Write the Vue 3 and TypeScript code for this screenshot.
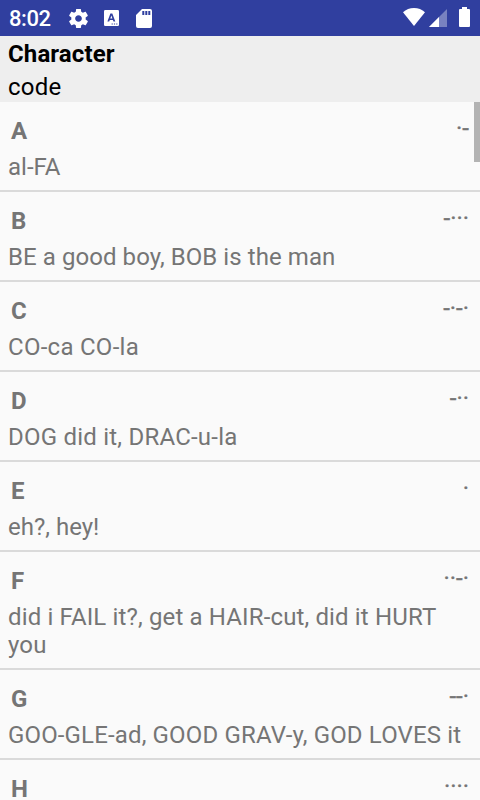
<script setup lang="ts">
interface Entry {
  character: string
  code: string
  phrase: string
  tracking: number
}

const entries: Entry[] = [
  { character: 'A', code: '·-', phrase: 'al-FA', tracking: 0 },
  { character: 'B', code: '-···', phrase: 'BE a good boy, BOB is the man', tracking: 0.07 },
  { character: 'C', code: '-·-·', phrase: 'CO-ca CO-la', tracking: 0.27 },
  { character: 'D', code: '-··', phrase: 'DOG did it, DRAC-u-la', tracking: 0.22 },
  { character: 'E', code: '·', phrase: 'eh?, hey!', tracking: 0 },
  { character: 'F', code: '··-·', phrase: 'did i FAIL it?, get a HAIR-cut, did it HURT you', tracking: 0.14 },
  { character: 'G', code: '--·', phrase: 'GOO-GLE-ad, GOOD GRAV-y, GOD LOVES it', tracking: 0.15 },
  { character: 'H', code: '····', phrase: '', tracking: 0 },
]
</script>

<template>
  <div class="screen">
    <div class="status">
      <span class="clock">8:02</span>
      <svg class="gear" viewBox="0 0 24 24"><path d="M19.43 12.98c.04-.32.07-.64.07-.98s-.03-.66-.07-.98l2.110-1.650c.19-.15.24-.42.12-.64l-2-3.460c-.12-.22-.39-.3-.61-.22l-2.490 1c-.52-.4-1.080-.73-1.690-.98l-.38-2.650C14.460 2.180 14.250 2 14 2h-4c-.25 0-.46.18-.49.42l-.38 2.650c-.61.25-1.170.59-1.690.98l-2.490-1c-.23-.09-.49 0-.61.22l-2 3.460c-.13.22-.07.49.12.64l2.110 1.650c-.04.32-.07.65-.07.98s.03.66.07.98l-2.110 1.650c-.19.15-.24.42-.12.64l2 3.460c.12.22.39.3.61.22l2.490-1c.52.4 1.080.73 1.690.98l.38 2.650c.03.24.24.42.49.42h4c.25 0 .46-.18.49-.42l.38-2.650c.61-.25 1.170-.59 1.690-.98l2.490 1c.23.09.49 0 .61-.22l2-3.460c.12-.22.07-.49-.12-.64l-2.110-1.650zM12 15.500c-1.930 0-3.500-1.570-3.500-3.500s1.570-3.500 3.500-3.500 3.500 1.570 3.500 3.500-1.570 3.500-3.500 3.500z" /></svg>
      <svg class="keyboard" viewBox="0 0 15 16">
        <rect width="15" height="16" rx="1.2" />
        <path class="cut" fill-rule="evenodd" d="M6.400 3.500h1.900l3 8.100H9.500l-.6-1.700H5.800l-.6 1.700H3.400zM7.350 5.500l-1.050 3h2.100z" />
        <path class="cut" d="M7.600 13.400h1.200v1.200H7.600zM9.900 13.400h1.200v1.200H9.900zM12.200 13.400h1.200v1.200h-1.200z" />
      </svg>
      <svg class="card" viewBox="0 0 16 19"><path fill-rule="evenodd" d="M14 0H6L0 6v11a2 2 0 0 0 2 2h12a2 2 0 0 0 2-2V2a2 2 0 0 0-2-2zM8.300 6H6.300V2h2zm3 0H9.300V2h2zm3 0h-2V2h2z" /></svg>
      <svg class="wifi" viewBox="0 0 22 18"><path d="M11 18 0 4.200C3 1.500 6.800 0 11 0s8 1.500 11 4.200z" /></svg>
      <svg class="signal" viewBox="0 0 18 18"><path opacity=".35" d="M0 18 18 0v18z" /><path d="M0 18 10 8v10z" /></svg>
      <svg class="battery" viewBox="0 0 11 20"><path d="M3 0h5v2h2a1 1 0 0 1 1 1v16a1 1 0 0 1-1 1H1a1 1 0 0 1-1-1V3a1 1 0 0 1 1-1h2z" /></svg>
    </div>
    <header class="header">
      <div class="title">Character</div>
      <div class="subtitle">code</div>
    </header>
    <main class="list">
      <div v-for="entry in entries" :key="entry.character" class="row">
        <div class="top">
          <span class="character">{{ entry.character }}</span>
          <span class="code">{{ entry.code }}</span>
        </div>
        <div class="phrase" :style="{ letterSpacing: entry.tracking + 'px' }">{{ entry.phrase }}</div>
      </div>
      <div class="thumb"></div>
    </main>
  </div>
</template>

<style>
body {
  background: #fafafa;
}
</style>

<style scoped>
.screen {
  width: 480px;
  height: 800px;
  overflow: hidden;
  display: flex;
  flex-direction: column;
  background: #fafafa;
  font-family: Roboto, "Liberation Sans", sans-serif;
  font-size: 24px;
  line-height: 28px;
}
.status {
  height: 36px;
  flex: none;
  box-sizing: border-box;
  display: flex;
  align-items: center;
  padding: 0 10px 0 9px;
  background: #303f9f;
  color: #fff;
}
.status svg {
  flex: none;
  fill: #fff;
}
.clock {
  width: 58px;
  font-size: 22px;
  font-weight: 500;
  letter-spacing: -0.4px;
  padding-top: 1px;
}
.status .gear {
  width: 23px;
  height: 23px;
}
.keyboard {
  width: 15px;
  height: 16px;
  margin-left: 14px;
}
.status .cut {
  fill: #303f9f;
}
.card {
  width: 16px;
  height: 19px;
  margin-left: 17px;
}
.wifi {
  width: 22px;
  height: 18px;
  margin-left: auto;
  margin-top: -2px;
}
.signal {
  width: 18px;
  height: 18px;
  margin-left: 4px;
}
.battery {
  width: 11px;
  height: 20px;
  margin-left: 12px;
  margin-top: -2px;
}
.header {
  height: 66px;
  flex: none;
  box-sizing: border-box;
  padding: 4px 8px 0;
  background: #eee;
  color: #000;
}
.title {
  font-weight: 700;
  letter-spacing: 0.12px;
}
.subtitle {
  padding-top: 5px;
  letter-spacing: 0.25px;
}
.list {
  position: relative;
  flex: 1;
  min-height: 0;
  overflow: hidden;
  color: #757575;
}
.row {
  padding: 15px 8px 9px;
  border-bottom: 2px solid #dadada;
}
.top {
  display: flex;
  justify-content: space-between;
  height: 28px;
  padding: 0 3px;
  margin-bottom: 8px;
}
.character {
  font-weight: 700;
}
.code {
  font-size: 24px;
  line-height: 22px;
  -webkit-text-stroke: 0.35px #757575;
}
.thumb {
  position: absolute;
  top: 0;
  right: 0;
  width: 6px;
  height: 60px;
  background: #b3b3b3;
}
</style>
